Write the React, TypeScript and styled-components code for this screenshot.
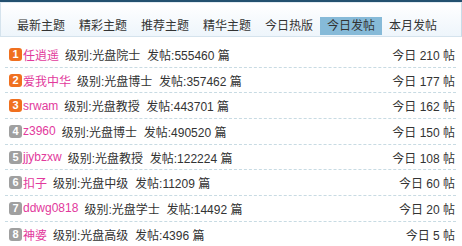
import styled, { createGlobalStyle } from 'styled-components';

const GlobalStyle = createGlobalStyle`
	html, body {
		margin: 0;
		padding: 0;
		background: #fff;
	}

	body {
		font-family: 'Liberation Sans', Arial, 'Noto Sans CJK SC', sans-serif;
		font-size: 12px;
		color: #333;
	}
`;

const Panel = styled.div`
	width: 462px;
	height: 246px;
	overflow: hidden;
	border-top: 2px solid #23506f;
`;

const TabBar = styled.div`
	display: flex;
	align-items: flex-end;
	height: 32px;
	padding: 0 0 1px 9px;
	border: 1px solid #d5e3ed;
	border-top-color: #e2ebf2;
	border-right-color: #c9dbe8;
	background: linear-gradient(to bottom, #ffffff, #eef5fb);
`;

const Tab = styled.div<{ $active?: boolean }>`
	height: 18px;
	line-height: 18px;
	padding: 0 7px;
	font-size: 12px;
	color: #333;
	background: ${(p) => (p.$active ? '#86bad8' : 'transparent')};
	white-space: nowrap;
`;

const List = styled.ul`
	list-style: none;
	margin: 5px 6px 0 5px;
	padding: 0;
`;

const Row = styled.li`
	display: flex;
	align-items: center;
	height: 24.7px;
	padding: 0 1px 0 4px;
	border-bottom: 1px dashed #c8dbe3;
	white-space: nowrap;

	&:last-child {
		border-bottom: none;
	}
`;

const Rank = styled.span<{ $top?: boolean }>`
	display: inline-flex;
	align-items: center;
	justify-content: center;
	width: 13px;
	height: 13px;
	margin-right: 1px;
	border-radius: 3px;
	background: ${(p) => (p.$top ? '#f0701f' : '#a0a0a0')};
	color: #fff;
	font-size: 11px;
	font-weight: bold;
	line-height: 1;
`;

const Name = styled.span`
	color: #e2399c;
	margin-right: 6px;
	font-size: 12px;
`;

const Info = styled.span`
	flex: 1;
	color: #333;
`;

const Today = styled.span`
	color: #333;
`;

const tabs = ['最新主题', '精彩主题', '推荐主题', '精华主题', '今日热版', '今日发帖', '本月发帖'];

const rows = [
	{ name: '任逍遥', level: '光盘院士', posts: 555460, today: 210 },
	{ name: '爱我中华', level: '光盘博士', posts: 357462, today: 177 },
	{ name: 'srwam', level: '光盘教授', posts: 443701, today: 162 },
	{ name: 'z3960', level: '光盘博士', posts: 490520, today: 150 },
	{ name: 'jjybzxw', level: '光盘教授', posts: 122224, today: 108 },
	{ name: '扣子', level: '光盘中级', posts: 11209, today: 60 },
	{ name: 'ddwg0818', level: '光盘学士', posts: 14492, today: 20 },
	{ name: '神婆', level: '光盘高级', posts: 4396, today: 5 },
];

export default function App() {
	return (
		<>
			<GlobalStyle />
			<Panel>
				<TabBar>
					{tabs.map((t) => (
						<Tab key={t} $active={t === '今日发帖'}>
							{t}
						</Tab>
					))}
				</TabBar>

				<List>
					{rows.map((r, i) => (
						<Row key={r.name}>
							<Rank $top={i < 3}>{i + 1}</Rank>
							<Name>{r.name}</Name>
							<Info>
								级别:{r.level}&nbsp; 发帖:{r.posts} 篇
							</Info>
							<Today>今日 {r.today} 帖</Today>
						</Row>
					))}
				</List>
			</Panel>
		</>
	);
}
